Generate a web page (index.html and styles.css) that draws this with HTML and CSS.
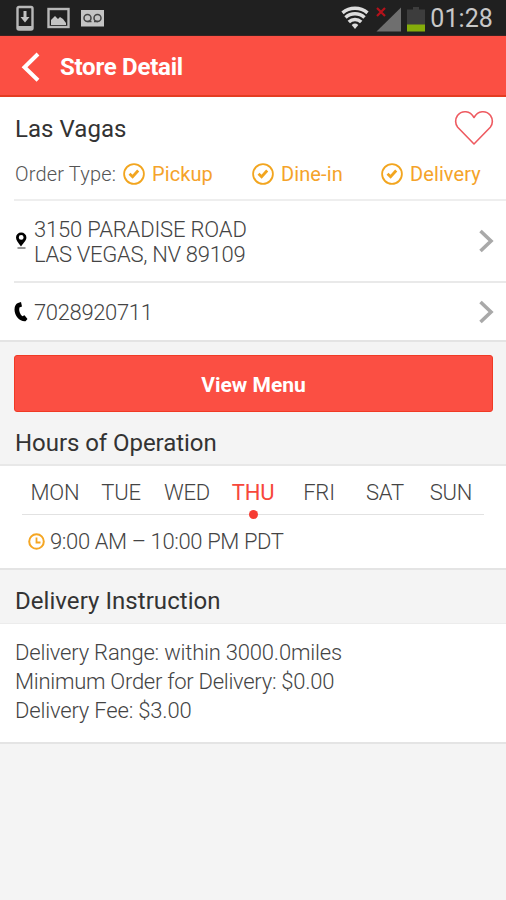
FILE: index.html
```
<!DOCTYPE html>
<html lang="en">
<head>
<meta charset="utf-8">
<title>Store Detail</title>
<link rel="stylesheet" href="styles.css">
</head>
<body>
<div class="status">
  <svg class="status-left" width="92" height="27" viewBox="0 0 92 27">
    <rect x="2.500" y="2" width="15" height="22.500" rx="1.500" fill="none" stroke="#b8b8b8" stroke-width="2.400"/>
    <path d="M3 23h14" stroke="#b8b8b8" stroke-width="4"/>
    <path d="M10 6v7" stroke="#c4c4c4" stroke-width="3"/>
    <path d="M5.500 12h9l-4.500 5.500z" fill="#c4c4c4"/>
    <rect x="33.500" y="4" width="20" height="18" fill="none" stroke="#b8b8b8" stroke-width="2.400"/>
    <path d="M36 20v-5l4-4 3 3 2-2 3 2 3 4v2z" fill="#c4c4c4"/>
    <rect x="66" y="5" width="23" height="16.500" fill="#c4c4c4"/>
    <g fill="none" stroke="#444" stroke-width="1.500"><circle cx="72.500" cy="13" r="3.500"/><circle cx="82.500" cy="13" r="3.500"/><path d="M72.500 16.500h4M79 16.500h4"/></g>
  </svg>
  <div class="status-right">
    <svg width="86" height="28" viewBox="0 0 86 28">
      <path d="M14 24l-3.300-4a5 5 0 0 1 6.600 0z" fill="#ddd"/>
      <g fill="none" stroke="#ddd" stroke-width="3.500"><path d="M1.500 7.800a19.500 19.500 0 0 1 25 0"/><path d="M4.500 12.500a14 14 0 0 1 19 0"/><path d="M7.800 17a9 9 0 0 1 12.400 0"/></g>
      <path d="M60 2.500v24H35.500z" fill="#6f6f6f"/>
      <path d="M36 3l8 8M44 3l-8 8" stroke="#b5121b" stroke-width="2.200"/>
      <path d="M66 4.500h6V2h6v2.500h6v16H66z" fill="#3d3d3d"/>
      <rect x="66" y="19.500" width="18" height="7" fill="#85ad0a"/>
    </svg>
    <span class="clock">01:28</span>
  </div>
</div>
<header class="bar">
  <svg width="20" height="32" viewBox="0 0 20 32"><path d="M18 3L4.500 16.200l13.500 13" fill="none" stroke="#fff" stroke-width="4"/></svg>
  <h1>Store Detail</h1>
</header>
<main>
  <section class="store">
    <div class="name-row">
      <h2>Las Vagas</h2>
      <svg width="40" height="36" viewBox="0 0 40 36"><path d="M20 34L3.700 17.200C1 14 1 9 3.500 5.500C8 0 16 .5 20 7.500C24 .5 32 0 36.500 5.500C39 9 39 14 36.300 17.200z" fill="none" stroke="#ee5a60" stroke-width="1.600" stroke-linejoin="round"/></svg>
    </div>
    <div class="types">
      <span class="label">Order Type:</span>
      <span class="type"><svg width="22" height="22" viewBox="0 0 22 22"><circle cx="11" cy="11" r="9.900"/><path class="tick" d="M6.500 10.800l3.100 3L15.200 7.500"/></svg><span>Pickup</span></span>
      <span class="type"><svg width="22" height="22" viewBox="0 0 22 22"><circle cx="11" cy="11" r="9.900"/><path class="tick" d="M6.500 10.800l3.100 3L15.200 7.500"/></svg><span>Dine-in</span></span>
      <span class="type"><svg width="22" height="22" viewBox="0 0 22 22"><circle cx="11" cy="11" r="9.900"/><path class="tick" d="M6.500 10.800l3.100 3L15.200 7.500"/></svg><span>Delivery</span></span>
    </div>
    <div class="link address">
      <svg class="lead" width="14" height="18" viewBox="0 0 14 18"><path d="M7 14.500C4 10.500 2 8 2 5.500a5.200 5 0 0 1 10.400 0C12.400 8 10 10.500 7 14.500zM7.200 3a2.400 2.400 0 1 0 0 4.800a2.400 2.400 0 0 0 0-4.800z" fill="#000" fill-rule="evenodd"/><path d="M3.500 16h8" stroke="#999" stroke-width="2"/></svg>
      <p><span class="line1">3150 PARADISE ROAD</span><br><span class="line2">LAS VEGAS, NV 89109</span></p>
      <svg class="chev" width="16" height="24" viewBox="0 0 16 24"><path d="M2.500 2l10.500 10L2.500 22" fill="none" stroke="#a9a9a9" stroke-width="3.600"/></svg>
    </div>
    <div class="link phone">
      <svg class="lead" width="14" height="20" viewBox="0 0 14 20"><path d="M4 1L7 0l1 4.500-2.600.9C4.600 8.500 6 12 8.300 14.300l2.200-1 3 3.700-2 2.300C6 20 .5 14 .5 7.500.5 4 2 1.800 4 1z" fill="#000"/></svg>
      <p><span class="tel">7028920711</span></p>
      <svg class="chev" width="16" height="24" viewBox="0 0 16 24"><path d="M2.500 2l10.500 10L2.500 22" fill="none" stroke="#a9a9a9" stroke-width="3.600"/></svg>
    </div>
  </section>
  <button class="menu"><span>View Menu</span></button>
  <h3 class="h-hours"><span>Hours of Operation</span></h3>
  <section class="hours">
    <div class="days"><span>MON</span><span>TUE</span><span>WED</span><span class="on">THU</span><span>FRI</span><span>SAT</span><span>SUN</span></div>
    <div class="time">
      <svg width="18" height="18" viewBox="0 0 18 18"><circle cx="8.500" cy="8.500" r="7.300" fill="none" stroke="#f5a623" stroke-width="2"/><path d="M8.500 4.500V9.500h4" fill="none" stroke="#f5a623" stroke-width="1.800"/></svg>
      <span class="range">9:00 AM – 10:00 PM PDT</span>
    </div>
  </section>
  <h3 class="h-delivery"><span>Delivery Instruction</span></h3>
  <section class="delivery">
    <p class="d1">Delivery Range: within 3000.0miles</p>
    <p class="d2">Minimum Order for Delivery: $0.00</p>
    <p class="d3">Delivery Fee: $3.00</p>
  </section>
</main>
</body>
</html>
```
FILE: styles.css
```
* { box-sizing: border-box; }
body { margin: 0; background: #f4f4f4; color: #444; font: 300 21px/29px Roboto, sans-serif; height: 900px; overflow: hidden; }
h1, h2, h3, p { margin: 0; font-weight: 400; }
svg { display: block; flex: none; }
.status { height: 36px; background: #202020; border-bottom: 1px solid #3a2222; display: flex; justify-content: space-between; padding: 5px 13px 0 15px; }
.status-right { display: flex; }
.clock { color: #c8c8c8; font-size: 25px; line-height: 27px; font-weight: 400; margin-left: 3px; letter-spacing: .1px; }
.bar { height: 61px; background: #fb4f43; border-bottom: 2px solid #e43c22; display: flex; align-items: center; padding: 3px 0 0 20px; gap: 20px; }
.bar h1 { color: #fff; font-size: 24px; font-weight: 700; line-height: 30px; letter-spacing: -.25px; }
.store { background: #fff; height: 245px; padding-left: 14px; border-bottom: 2px solid #e4e4e4; }
.name-row { height: 58px; display: flex; justify-content: space-between; padding: 13px 12px 0 0; }
.name-row h2 { font-size: 24px; line-height: 38px; color: #333; padding-left: 1px; letter-spacing: .05px; }
.types { height: 46px; display: grid; grid-template-columns: 109px 129px 129px 1fr; padding-top: 8px; border-bottom: 2px solid #eee; font-size: 20px; line-height: 22px; font-weight: 400; }
.label { color: #555; font-weight: 300; padding-left: 1px; letter-spacing: .18px; }
.type { display: flex; gap: 7px; color: #f5a32a; letter-spacing: .1px; }
.type svg { fill: none; stroke: #f2a51f; stroke-width: 1.800; }
.type .tick { stroke-width: 2.800; }
.link { display: flex; align-items: center; padding-right: 12px; font-size: 22px; line-height: 25px; }
.link p { flex: 1; margin-left: 6px; padding-top: 2px; font-weight: 300; }
.line1 { letter-spacing: -.17px; }
.line2 { letter-spacing: -.3px; }
.tel { letter-spacing: -.35px; }
.address { height: 82px; border-bottom: 2px solid #e9e9e9; }
.phone { height: 57px; }
.menu { display: block; width: 479px; height: 57px; margin: 13px 0 0 14px; border: 1px solid #f03a25; border-radius: 3px; background: #fb4f43; color: #fff; font: 700 21px/30px Roboto, sans-serif; padding: 2px 0 0; }
.h-hours, .h-delivery { padding-left: 15px; font-size: 24px; color: #333; }
.h-hours { height: 52px; line-height: 62px; letter-spacing: -.05px; }
.h-delivery { height: 53px; line-height: 62px; letter-spacing: .05px; }
.hours { height: 106px; background: #fff; border-top: 2px solid #e8e8e8; border-bottom: 2px solid #e4e4e4; padding: 0 22px; }
.days { height: 49px; display: grid; grid-template-columns: repeat(7, 1fr); text-align: center; line-height: 53px; font-size: 22px; letter-spacing: -.2px; border-bottom: 1px solid #e2e2e2; }
.days span { height: 48px; }
.on { position: relative; color: #f7473b; font-weight: 400; }
.on::after { content: ""; position: absolute; left: calc(50% - 4.500px); bottom: -5px; width: 9px; height: 9px; border-radius: 50%; background: #f63c33; }
.time { display: flex; align-items: center; height: 53px; padding-left: 6px; gap: 4px; font-size: 22px; letter-spacing: -.38px; }
.delivery { height: 121px; background: #fff; border-top: 1px solid #ececec; border-bottom: 2px solid #e4e4e4; padding: 14px 14px 0 15px; }
.delivery p { font-weight: 300; font-size: 22px; line-height: 29px; }
.delivery .d1 { letter-spacing: -.2px; }
.delivery .d2 { letter-spacing: -.27px; }
.delivery .d3 { letter-spacing: -.18px; }
```
